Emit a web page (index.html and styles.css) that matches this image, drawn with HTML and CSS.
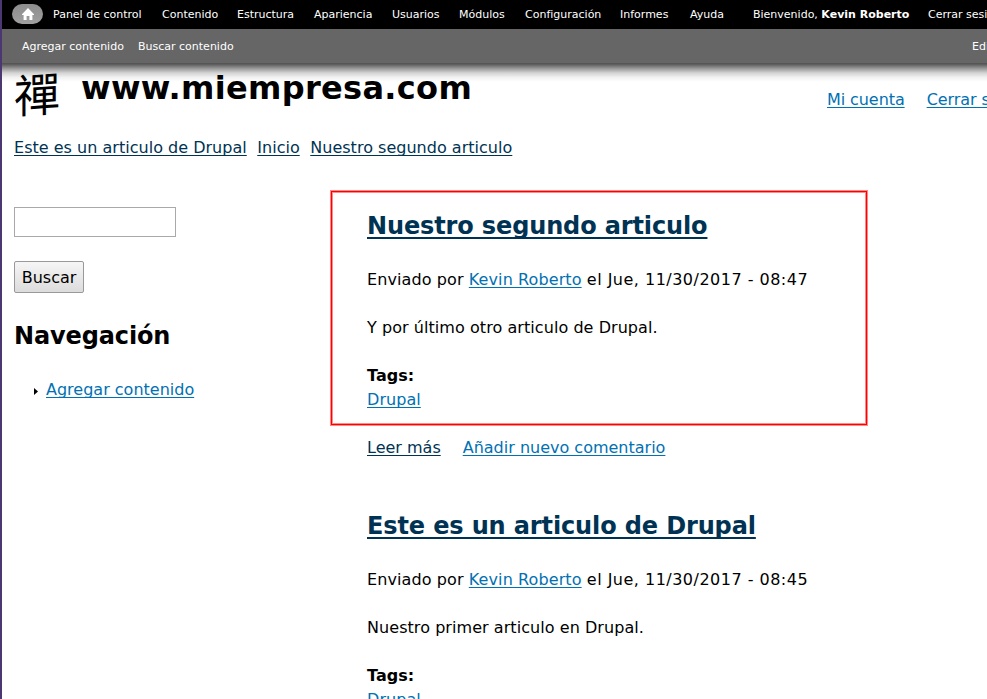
FILE: index.html
```html
<!DOCTYPE html>
<html lang="es">
<head>
<meta charset="utf-8">
<title>www.miempresa.com</title>
<link rel="stylesheet" href="styles.css">
</head>
<body>
<header class="toolbar">
  <nav class="menu">
    <a class="home"><svg width="14" height="12" viewBox="0 0 14 12"><path d="M7 0 1 6.2V7h1.6v5h3V8h2.8v4h3V7H13v-.8z" fill="#fff"/></svg></a>
    <a>Panel de control</a><a>Contenido</a><a>Estructura</a><a>Apariencia</a><a>Usuarios</a><a>Módulos</a><a>Configuración</a><a>Informes</a><a>Ayuda</a>
    <span>Bienvenido, <b>Kevin Roberto</b></span><a>Cerrar sesión</a>
  </nav>
  <nav class="shortcuts"><a>Agregar contenido</a><a>Buscar contenido</a><a class="edit">Editar atajos</a></nav>
</header>
<div class="page">
  <div class="brand">
    <span class="logo" lang="zh-Hant">禪</span>
    <h1>www.miempresa.com</h1>
    <nav class="account"><a>Mi cuenta</a><a>Cerrar sesión</a></nav>
  </div>
  <nav class="main-menu"><a>Este es un articulo de Drupal</a><a>Inicio</a><a>Nuestro segundo articulo</a></nav>
  <div class="columns">
    <aside>
      <input class="search" type="text" aria-label="Buscar">
      <button class="submit">Buscar</button>
      <h2>Navegación</h2>
      <ul><li><i class="arrow"></i><a>Agregar contenido</a></li></ul>
    </aside>
    <main>
      <article>
        <div class="framed">
          <h2><a>Nuestro segundo articulo</a></h2>
          <p class="meta">Enviado por <a>Kevin Roberto</a> <span class="date">el Jue, 11/30/2017 - 08:47</span></p>
          <p>Y por último otro articulo de Drupal.</p>
          <p><b>Tags:</b><br><a>Drupal</a></p>
        </div>
        <div class="links"><a class="visited">Leer más</a><a>Añadir nuevo comentario</a></div>
      </article>
      <article>
        <div class="teaser">
          <h2><a>Este es un articulo de Drupal</a></h2>
          <p class="meta">Enviado por <a>Kevin Roberto</a> <span class="date">el Jue, 11/30/2017 - 08:45</span></p>
          <p>Nuestro primer articulo en Drupal.</p>
          <p><b>Tags:</b><br><a>Drupal</a></p>
        </div>
      </article>
    </main>
  </div>
</div>
</body>
</html>
```
FILE: styles.css
```css
* { box-sizing: border-box; }
html { height: 699px; overflow: hidden; }
body {
  margin: 0;
  height: 699px;
  overflow: hidden;
  border-left: 2px solid #4b3873;
  background: #fff;
  color: #000;
  font: 16px/24px Verdana, "DejaVu Sans", sans-serif;
}
a { color: #0071b3; text-decoration: underline; text-underline-offset: 2px; text-decoration-thickness: 1px; text-decoration-skip-ink: none; }
h1, h2, p, ul { margin: 0; padding: 0; }
.toolbar { font-size: 11px; color: #fff; white-space: nowrap; }
.toolbar::after { content: ""; display: block; height: 18px; margin-bottom: -18px; background: linear-gradient(rgba(0,0,0,.66), rgba(0,0,0,.4) 25%, rgba(0,0,0,.17) 50%, rgba(0,0,0,.05) 75%, transparent); }
.toolbar a { color: #fff; text-decoration: none; }
.menu {
  display: grid;
  grid-template-columns: 41px 109px 75px 77px 78px 67px 66px 95px 70px 63px 175px 90px;
  align-items: center;
  height: 29px;
  padding-left: 10px;
  background: #000;
}
.menu .home { display: flex; align-items: center; justify-content: center; width: 31px; height: 20px; margin-top: -1px; border-radius: 10px; background: linear-gradient(#8c8c8c, #a0a0a0); }
.shortcuts { display: grid; grid-template-columns: 116px 834px 100px; align-items: center; height: 35px; padding: 1px 0 0 20px; background: #666; border-bottom: 1px solid #555; }
.page { padding-left: 12px; }
.brand { display: flex; height: 72px; white-space: nowrap; }
.logo { flex: none; width: 46px; height: 54px; margin-right: 21px; padding-top: 3px; font: 400 46px/50px "Noto Sans CJK TC", sans-serif; transform: skewY(-4deg); }
h1 { flex: none; width: 746px; padding-top: 2px; font-size: 32px; line-height: 44px; letter-spacing: .32px; }
.account { display: flex; gap: 22px; padding-top: 24px; letter-spacing: -.08px; }
.main-menu { display: flex; gap: 10.5px; white-space: nowrap; letter-spacing: .02px; }
.main-menu a, .visited { color: #003353; }
.columns { display: flex; padding-top: 30px; }
aside { flex: none; width: 316px; padding-top: 17px; }
.search { display: block; width: 162px; height: 30px; border: 1px solid #a9a9a9; background: #fff; }
.submit { display: block; width: 70px; height: 32px; margin-top: 24px; padding: 2px 0 0; border: 1px solid #999; border-radius: 2px; background: linear-gradient(#f6f6f6, #dcdcdc); color: #000; font: inherit; }
h2 { font-size: 24px; line-height: 36px; white-space: nowrap; letter-spacing: -.13px; }
aside h2 { margin-top: 25px; }
ul { margin-top: 24px; list-style: none; }
li { display: flex; align-items: center; padding-left: 20px; }
.arrow { width: 12px; height: 7px; margin-top: 3px; background: #000; clip-path: polygon(0 0, 4px 3.5px, 0 7px); }
main { flex: none; width: 538px; }
.framed, .teaser { padding: 17px 36px 10px; border: 1px solid transparent; }
.framed { height: 236px; border-color: #ff8a8a; box-shadow: inset 0 0 0 1px #f00, inset 0 0 0 2px #ff8a8a; }
main h2 { margin-bottom: 24px; }
main h2 a { color: #003353; text-decoration-thickness: 2px; text-underline-offset: 3px; }
main p { margin-bottom: 24px; white-space: nowrap; letter-spacing: .06px; }
main .meta { letter-spacing: .1px; }
.date { letter-spacing: .49px; }
.links { display: flex; gap: 22px; padding: 10px 37px 0; white-space: nowrap; }
article { height: 300px; }
```
